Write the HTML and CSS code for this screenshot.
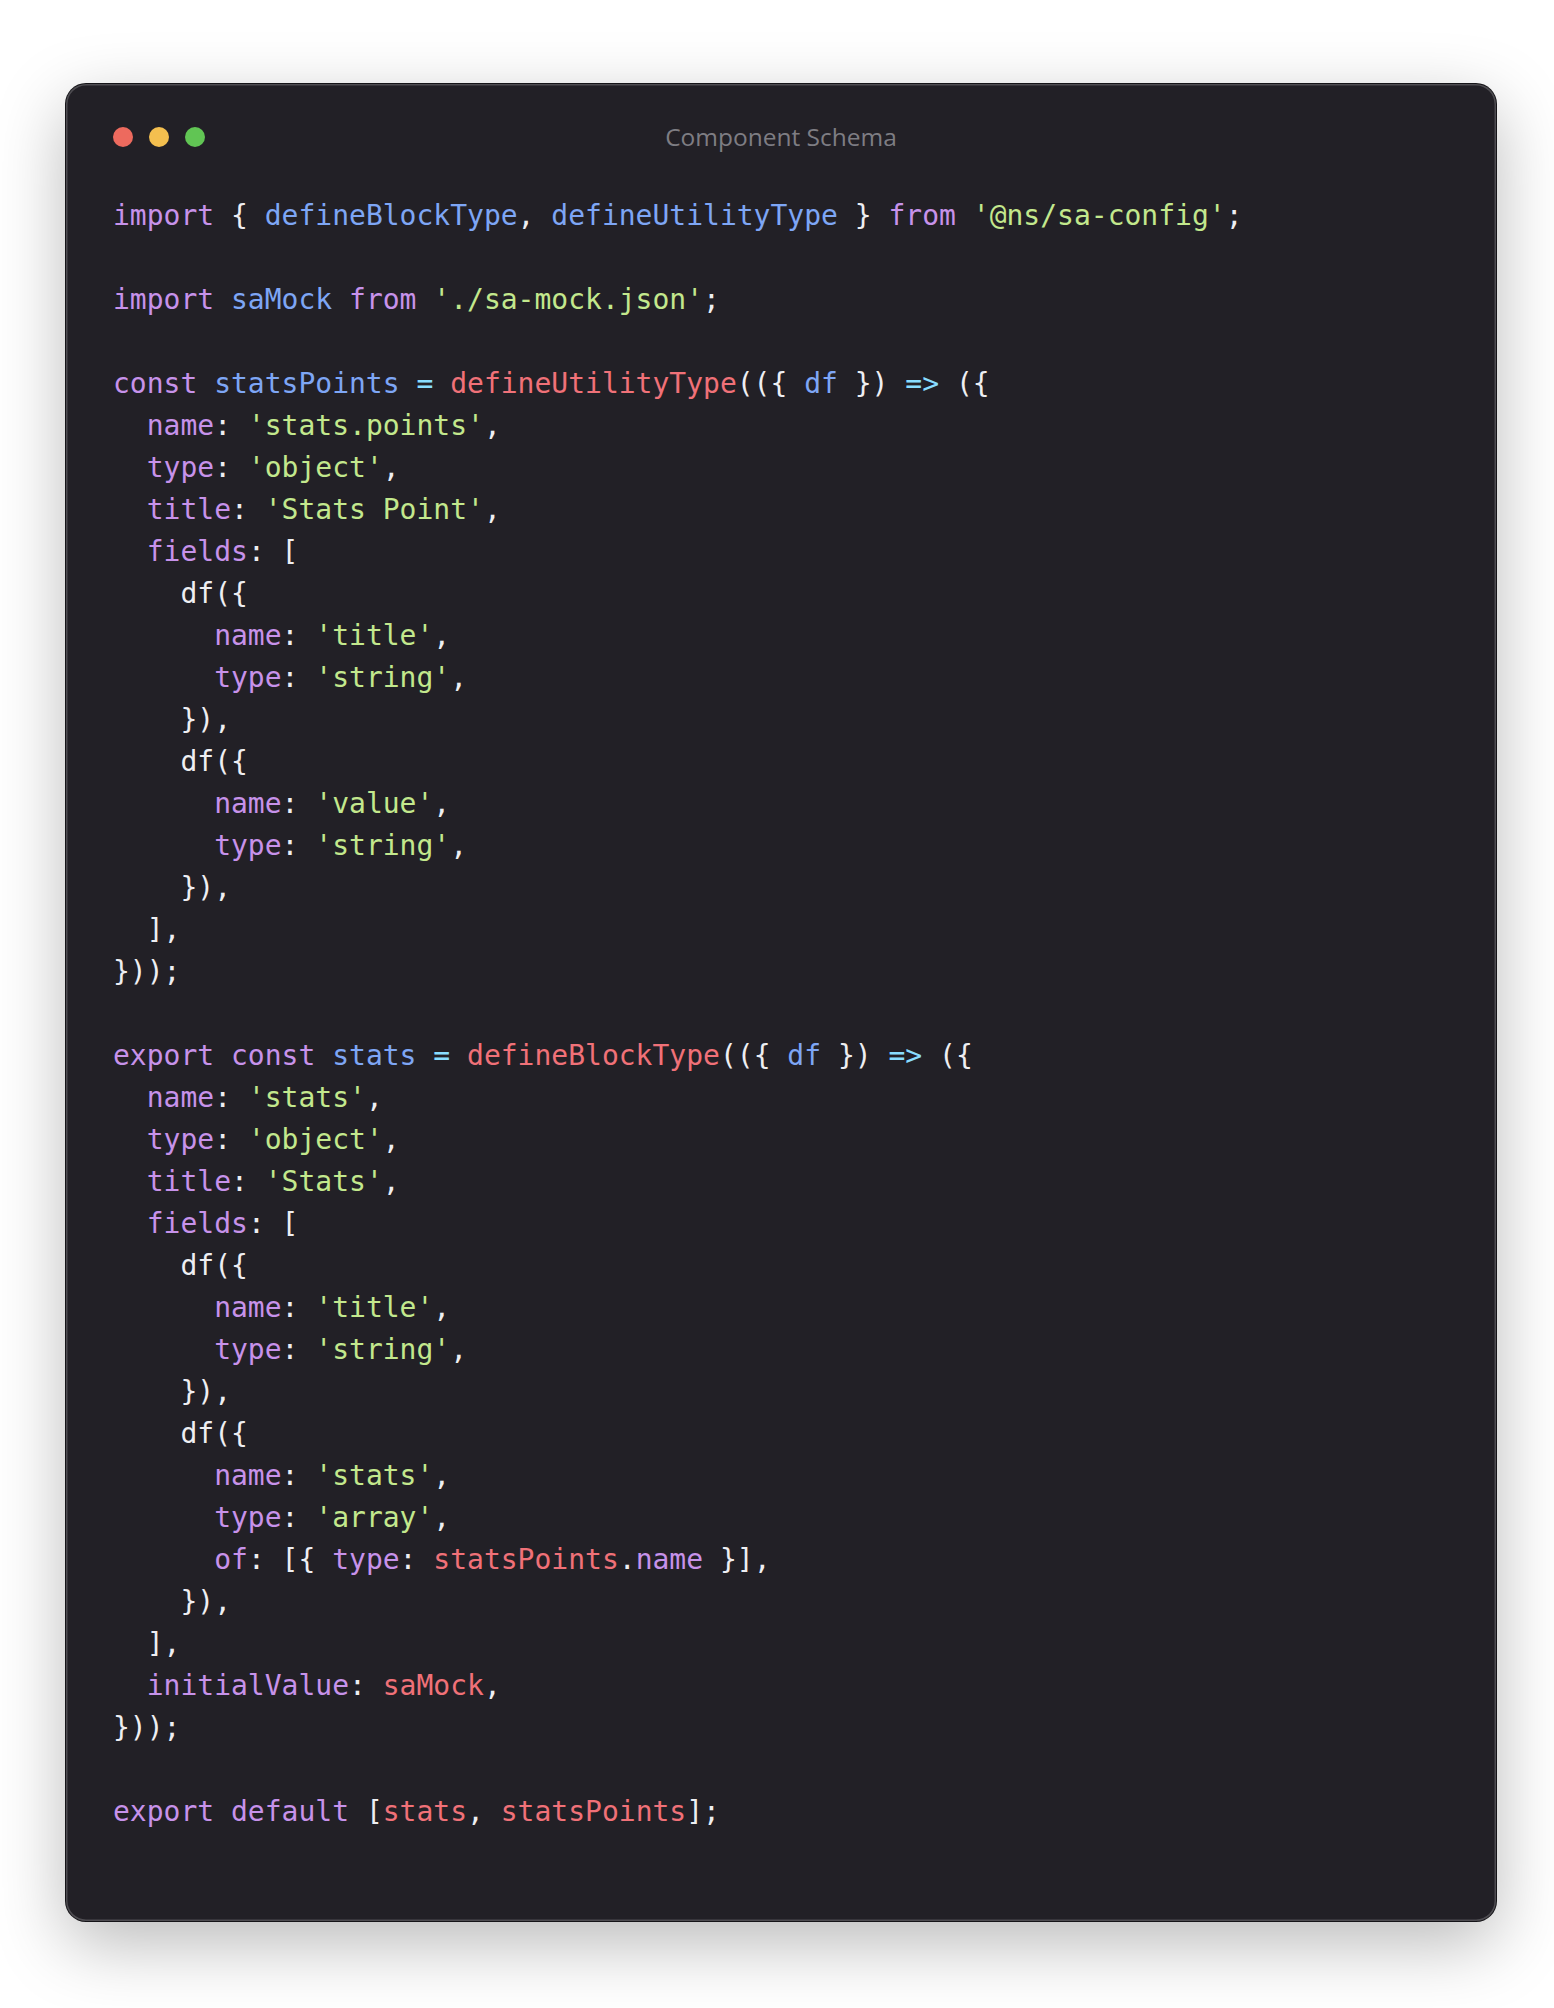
FILE: index.html
```html
<!DOCTYPE html>
<html lang="en">
<head>
<meta charset="utf-8">
<title>Component Schema</title>
<link rel="stylesheet" href="styles.css">
</head>
<body>
<div class="stage">
  <div class="window">
    <div class="header">
      <div class="lights">
        <span class="light red"></span>
        <span class="light yellow"></span>
        <span class="light green"></span>
      </div>
      <div class="title">Component Schema</div>
      <div class="spacer"></div>
    </div>
<pre class="code"><span class="k">import</span> { <span class="v">defineBlockType</span>, <span class="v">defineUtilityType</span> } <span class="k">from</span> <span class="s">'@ns/sa-config'</span>;

<span class="k">import</span> <span class="v">saMock</span> <span class="k">from</span> <span class="s">'./sa-mock.json'</span>;

<span class="k">const</span> <span class="v">statsPoints</span> <span class="o">=</span> <span class="f">defineUtilityType</span>(({ <span class="v">df</span> }) <span class="o">=&gt;</span> ({
  <span class="k">name</span>: <span class="s">'stats.points'</span>,
  <span class="k">type</span>: <span class="s">'object'</span>,
  <span class="k">title</span>: <span class="s">'Stats Point'</span>,
  <span class="k">fields</span>: [
    df({
      <span class="k">name</span>: <span class="s">'title'</span>,
      <span class="k">type</span>: <span class="s">'string'</span>,
    }),
    df({
      <span class="k">name</span>: <span class="s">'value'</span>,
      <span class="k">type</span>: <span class="s">'string'</span>,
    }),
  ],
}));

<span class="k">export</span> <span class="k">const</span> <span class="v">stats</span> <span class="o">=</span> <span class="f">defineBlockType</span>(({ <span class="v">df</span> }) <span class="o">=&gt;</span> ({
  <span class="k">name</span>: <span class="s">'stats'</span>,
  <span class="k">type</span>: <span class="s">'object'</span>,
  <span class="k">title</span>: <span class="s">'Stats'</span>,
  <span class="k">fields</span>: [
    df({
      <span class="k">name</span>: <span class="s">'title'</span>,
      <span class="k">type</span>: <span class="s">'string'</span>,
    }),
    df({
      <span class="k">name</span>: <span class="s">'stats'</span>,
      <span class="k">type</span>: <span class="s">'array'</span>,
      <span class="k">of</span>: [{ <span class="k">type</span>: <span class="f">statsPoints</span>.<span class="k">name</span> }],
    }),
  ],
  <span class="k">initialValue</span>: <span class="f">saMock</span>,
}));

<span class="k">export</span> <span class="k">default</span> [<span class="f">stats</span>, <span class="f">statsPoints</span>];</pre>
  </div>
</div>
</body>
</html>
```

FILE: styles.css
```css
html, body {
  margin: 0;
  padding: 0;
  background: #ffffff;
}

.stage {
  padding: 84px 0 0 66px;
  width: 1554px;
  height: 2008px;
  box-sizing: border-box;
  overflow: hidden;
}

.window {
  width: 1430px;
  height: 1837px;
  box-sizing: border-box;
  background: #222026;
  border-radius: 20px;
  padding: 43px 47px 0 47px;
  box-shadow:
    0 0 0 1px #151418,
    inset 0 0 0 1.5px rgba(255, 255, 255, 0.2),
    0 22px 70px rgba(0, 0, 0, 0.28);
}

.header {
  display: grid;
  grid-template-columns: 1fr auto 1fr;
  align-items: center;
  height: 20px;
}

.lights {
  display: flex;
  gap: 16px;
}

.light {
  width: 20px;
  height: 20px;
  border-radius: 50%;
}

.light.red { background: #ed6a5e; }
.light.yellow { background: #f4bf4f; }
.light.green { background: #61c554; }

.title {
  font-family: "Open Sans", "Noto Sans", sans-serif;
  font-size: 24.5px;
  line-height: 20px;
  color: #7e7d83;
}

.code {
  margin: 48px 0 0 0;
  font-family: "DejaVu Sans Mono", "Liberation Mono", monospace;
  font-size: 28px;
  line-height: 42px;
  color: #eeeef2;
  white-space: pre;
}

.k { color: #c792ea; }
.v { color: #7ea6f5; }
.f { color: #f07178; }
.s { color: #c3e88d; }
.o { color: #89ddff; }
```
